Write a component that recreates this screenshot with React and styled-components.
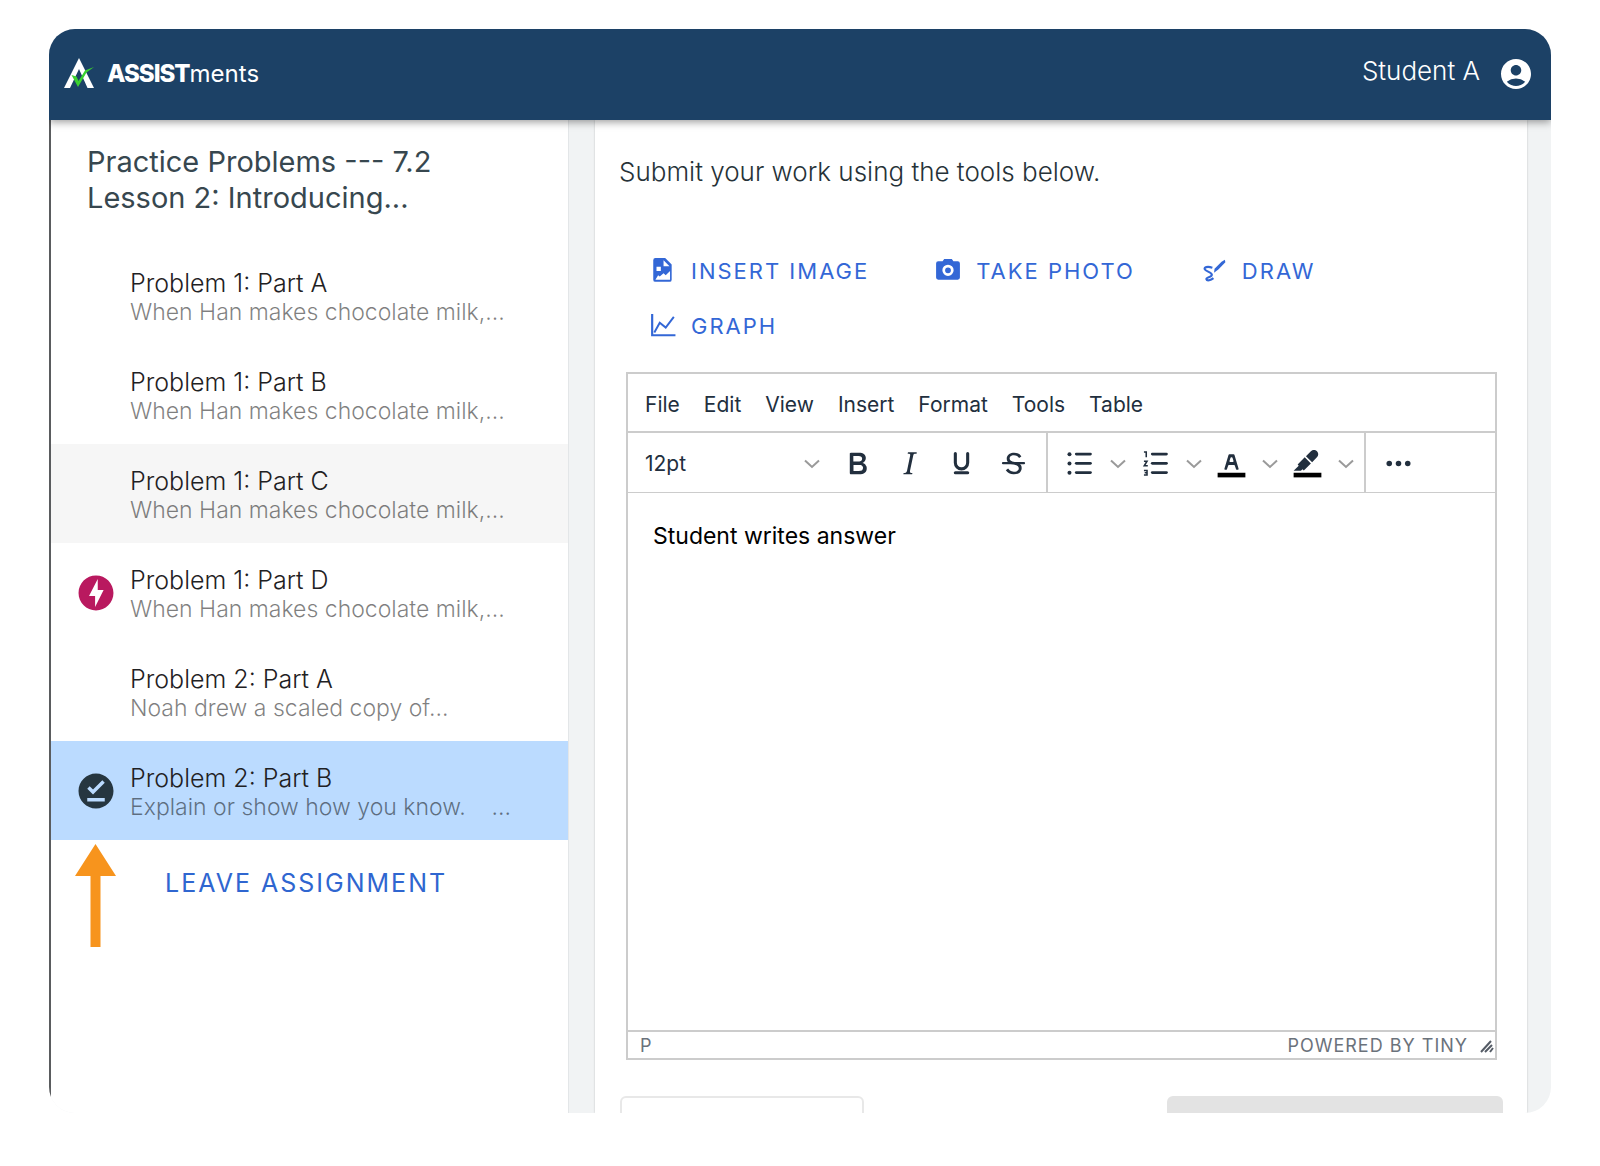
import React from 'react';
import styled, { createGlobalStyle } from 'styled-components';
import { MdAccountCircle, MdOfflineBolt, MdOfflinePin } from 'react-icons/md';

const sans = 'Inter, "Liberation Sans", sans-serif';
const wide = 'Inter, "Noto Sans", sans-serif';

const GlobalStyle = createGlobalStyle`
  *, *::before, *::after { box-sizing: border-box; }
  body { margin: 0; background: #fff; font-family: ${wide}; }
  button, select, textarea { font: inherit; color: inherit; background: none; border: 0; padding: 0; margin: 0; }
  button, select { cursor: pointer; }
  h1, p, ul { margin: 0; padding: 0; }
  svg { display: block; flex: none; }
`;

const Page = styled.div`
  display: flex;
  height: 100vh;
  padding: 29px 49px 53px;
`;

const Frame = styled.div`
  flex: 1;
  display: flex;
  flex-direction: column;
  min-width: 0;
  overflow: hidden;
  border-radius: 26px;
  background: #f1f3f4;
`;

const Header = styled.header`
  flex: none;
  z-index: 1;
  display: flex;
  align-items: center;
  justify-content: space-between;
  height: 91px;
  padding: 0 17px 2px 15px;
  background: #1c4166;
  color: #fff;
  box-shadow: 0 2px 8px rgba(0, 0, 0, 0.4);
`;

const Brand = styled.a`
  display: flex;
  align-items: center;
  gap: 12px;
  color: #fff;
  text-decoration: none;
  font: 400 24px/32px ${wide};
`;

const BrandStrong = styled.strong`
  font-weight: 800;
  letter-spacing: -1px;
`;

const Account = styled.button`
  display: flex;
  align-items: center;
  gap: 18px;
  font-size: 26px;
  font-weight: 300;
  line-height: 32px;
`;

const AccountName = styled.span`
  padding-bottom: 6px;
`;

const Columns = styled.div`
  flex: 1;
  display: flex;
  gap: 26px;
  min-height: 0;
  padding-right: 24px;
`;

const Sidebar = styled.nav`
  flex: none;
  width: 520px;
  border-left: 2px solid #5a5c5e;
  border-right: 1px solid #e3e6e8;
  background: #fff;
`;

const AssignmentTitle = styled.h1`
  padding: 24px 36px 30px;
  color: #37474f;
  font-size: 29px;
  font-weight: 400;
  line-height: 36px;
`;

const ProblemList = styled.ul`
  list-style: none;
`;

const Problem = styled.button`
  display: grid;
  grid-template-columns: 38px 1fr;
  column-gap: 17px;
  align-items: center;
  width: 100%;
  height: 99px;
  padding: 0 24px;
  text-align: left;
  background: ${({ $tone }) => ({ hover: '#f6f6f6', selected: '#bbdbff' }[$tone] || '#fff')};
`;

const ProblemText = styled.span`
  display: flex;
  flex-direction: column;
  padding-top: 3px;
  white-space: pre;
`;

const ProblemName = styled.span`
  color: #1f2123;
  font-size: 25px;
  font-weight: 300;
  line-height: 30px;
`;

const ProblemPreview = styled.span`
  color: rgba(0, 0, 0, 0.5);
  font-size: 23px;
  font-weight: 300;
  line-height: 29px;
`;

const SidebarFooter = styled.div`
  display: flex;
  align-items: flex-start;
  gap: 49px;
  padding: 4px 24px;
`;

const LeaveButton = styled.button`
  padding: 23px 0;
  color: #2f66d0;
  font-size: 25px;
  line-height: 32px;
  letter-spacing: 2px;
`;

const Main = styled.main`
  flex: 1;
  display: flex;
  flex-direction: column;
  min-width: 0;
  padding: 34px 24px 0;
  background: #fff;
  box-shadow: 0 0 2px rgba(0, 0, 0, 0.2);
`;

const Prompt = styled.p`
  color: #263238;
  font-size: 26px;
  font-weight: 300;
  line-height: 36px;
`;

const Actions = styled.div`
  display: flex;
  flex-wrap: wrap;
  column-gap: 66px;
  padding: 53px 31px 19px;
`;

const Action = styled.button`
  display: flex;
  align-items: center;
  gap: 15px;
  height: 55px;
  color: #3367d6;
  font-size: 22px;
  line-height: 28px;
  letter-spacing: 2px;
`;

const Editor = styled.section`
  flex: none;
  display: flex;
  flex-direction: column;
  height: 688px;
  margin: 0 6px 0 7px;
  border: 2px solid #ccc;
  color: #222f3e;
  font-family: ${sans};
`;

const MenuBar = styled.div`
  display: flex;
  align-items: center;
  gap: 24px;
  height: 59px;
  padding: 4px 17px 0;
  border-bottom: 2px solid #ccc;
  font-size: 21px;
  line-height: 28px;
`;

const Toolbar = styled.div`
  display: flex;
  height: 60px;
  border-bottom: 1px solid #ccc;
`;

const ToolGroup = styled.div`
  display: flex;
  align-items: center;
  gap: ${({ $gap }) => $gap}px;
  padding: ${({ $pad }) => $pad};
  border-right: ${({ $last }) => ($last ? '0' : '2px solid #ccc')};
`;

const SizeField = styled.label`
  display: grid;
  grid-template-columns: 1fr 16px;
  align-items: center;
  width: 175px;
  margin-right: 4px;
  font-size: 21px;
  line-height: 28px;

  & > * { grid-row: 1; }
  & > select { grid-column: 1 / 3; appearance: none; outline: 0; }
  & > svg { grid-column: 2; pointer-events: none; }
`;

const Split = styled.span`
  display: flex;
  align-items: center;
  gap: 12px;
`;

const Answer = styled.textarea`
  flex: 1;
  width: 100%;
  padding: 27px 25px;
  resize: none;
  outline: 0;
  color: #000;
  font-size: 23px;
  line-height: 32px;
`;

const StatusBar = styled.div`
  display: flex;
  align-items: center;
  justify-content: space-between;
  height: 28px;
  padding: 1px 0 0 12px;
  border-top: 2px solid #ccc;
  color: #6b727b;
  font-size: 18px;
  line-height: 24px;
`;

const Powered = styled.span`
  display: flex;
  align-items: center;
  gap: 12px;
  letter-spacing: 1px;
`;

const BottomActions = styled.div`
  display: flex;
  justify-content: space-between;
  padding: 36px 0 0 1px;
`;

const BottomButton = styled.button`
  height: 56px;
  width: ${({ $primary }) => ($primary ? 336 : 244)}px;
  border-radius: 6px;
  border: ${({ $primary }) => ($primary ? '0' : '2px solid #e8e8e8')};
  background: ${({ $primary }) => ($primary ? '#e3e3e3' : '#fff')};
`;

const Logo = () => (
  <svg width="31" height="31" viewBox="0 0 31 31" aria-hidden="true">
    <path d="M15 0 L30 30 H23.500 L15 11 L6 30 H0 Z" fill="#fff" />
    <path d="M7.500 17 L12.500 18.500 L14.500 23 L21 12.500 L30 9 L22.500 14.500 L14 29 Z" fill="#3bd12f" />
  </svg>
);

const Chevron = () => (
  <svg width="16" height="10" viewBox="0 0 16 10" fill="none" stroke="#9a9a9a" strokeWidth="2" aria-hidden="true">
    <path d="M1 1.500 L8 8 L15 1.500" />
  </svg>
);

const ToolIcon = ({ children }) => (
  <svg width="37" height="37" viewBox="0 0 24 24" fill="#222f3e" aria-hidden="true">{children}</svg>
);

const Bold = () => (
  <ToolIcon><path fillRule="evenodd" d="M7.800 19c-.3 0-.5 0-.6-.2l-.2-.5V5.700c0-.2 0-.4.2-.5l.6-.2h5c1.500 0 2.700.3 3.500 1 .7.6 1.100 1.400 1.100 2.500a3 3 0 0 1-.6 1.900c-.4.6-1 1-1.600 1.200.4.1.9.3 1.300.6s.8.7 1 1.200c.4.4.5 1 .5 1.600 0 1.300-.4 2.300-1.300 3-.8.7-2.100 1-3.800 1H7.800Zm5-8.300c.6 0 1.200-.1 1.600-.5.4-.3.6-.7.6-1.300 0-1.100-.8-1.700-2.300-1.700H9.300v3.500h3.400Zm.5 6c.7 0 1.300-.1 1.700-.4.4-.4.6-.9.6-1.500s-.2-1-.7-1.400c-.4-.3-1-.4-2-.4H9.400v3.800h4Z" /></ToolIcon>
);
const Italic = () => (
  <ToolIcon><path d="m16.700 4.700-.1.900h-.3c-.6 0-1 0-1.400.3-.3.3-.4.6-.5 1.100l-2.100 9.800v.6c0 .5.4.8 1.400.8h.2l-.2.8H8l.2-.8h.2c1.100 0 1.800-.5 2-1.500l2-9.800.1-.5c0-.6-.4-.8-1.400-.8h-.3l.2-.9h5.800Z" /></ToolIcon>
);
const Underline = () => (
  <ToolIcon>
    <path d="M8 5.500v6a4 4 0 0 0 8 0v-6" fill="none" stroke="#222f3e" strokeWidth="2" strokeLinecap="round" />
    <rect x="7" y="17" width="10" height="2" rx="1" />
  </ToolIcon>
);
const Strike = () => (
  <ToolIcon>
    <path d="M15.600 8.500c-.5-.7-1-1.100-1.300-1.300-.6-.4-1.300-.6-2-.6-2.700 0-2.800 1.700-2.800 2.100 0 1.600 1.800 2 3.200 2.300 4.400.9 4.600 2.800 4.600 3.900 0 1.400-.7 4.100-5 4.100A6.200 6.200 0 0 1 7 16.400l1.500-1.100c.4.6 1.600 2 3.700 2 1.600 0 2.500-.4 3-1.200.4-.8.3-2-.8-2.600-.7-.4-1.600-.7-2.900-1-1-.2-3.900-.8-3.900-3.600C7.600 6 10.300 5 12.400 5c2.900 0 4.200 1.600 4.700 2.400l-1.500 1.100Z" />
    <rect x="4.500" y="11" width="15" height="1.500" rx=".7" />
  </ToolIcon>
);
const Lines = () => [5, 11, 17].map((y) => <rect key={y} x="9" y={y} width="11" height="1.800" rx=".9" />);
const Bullets = () => (
  <ToolIcon>
    <Lines />
    {[6, 12, 18].map((y) => <circle key={y} cx="5.500" cy={y} r="1.300" />)}
  </ToolIcon>
);
const Numbers = () => (
  <ToolIcon>
    <Lines />
    <path d="M4.500 4.500H6V8M4.500 10.500H6.500L4.700 13.500H7M4.500 16.500H6.500V19.500H4.500M5 18H6.500" fill="none" stroke="#222f3e" />
  </ToolIcon>
);
const TextColor = () => (
  <ToolIcon>
    <rect x="3" y="18" width="18" height="3" fill="#000" />
    <path fillRule="evenodd" d="M8.700 16h-.8a.5.5 0 0 1-.5-.6l2.700-9c.1-.3.3-.4.5-.4h2.800c.2 0 .4.1.5.4l2.700 9a.5.5 0 0 1-.5.600h-.8a.5.5 0 0 1-.4-.4l-.7-2.200c0-.3-.3-.4-.5-.4h-3.400c-.2 0-.4.1-.5.4l-.7 2.200c0 .3-.2.4-.4.4Zm2.600-7.600-.6 2a.5.5 0 0 0 .5.600h1.600a.5.5 0 0 0 .5-.6l-.6-2c0-.3-.3-.4-.5-.4h-.4c-.2 0-.4.1-.5.4Z" />
  </ToolIcon>
);
const Highlight = () => (
  <ToolIcon>
    <rect x="3" y="18" width="18" height="3" fill="#000" />
    <path d="M7.700 16.700H3l3.300-3.300-.7-.8L10.200 8l4 4-4.600 4.600-.8-.8-1.100.9ZM11 7.300l3.200-3.200c1.400-1.400 3.500-.8 4.200.2.800 1.100.8 2.600-.3 3.700L15 11.200 11 7.300Z" />
  </ToolIcon>
);
const More = () => (
  <ToolIcon>{[6, 12, 18].map((x) => <circle key={x} cx={x} cy="12" r="1.800" />)}</ToolIcon>
);

const ActionIcon = ({ children }) => (
  <svg width="26" height="26" viewBox="0 0 24 24" fill="#3367d6" aria-hidden="true">{children}</svg>
);
const FileImage = () => (
  <ActionIcon>
    <path fillRule="evenodd" d="M5 0H14L20 6V20a2 2 0 0 1-2 2H5a2 2 0 0 1-2-2V2a2 2 0 0 1 2-2ZM12.500 2V7.500H18ZM5 20H18.500V12L14.500 16L12.500 14L9 17L7.500 16ZM6 8V12H10V8Z" />
  </ActionIcon>
);
const Camera = () => (
  <ActionIcon>
    <path fillRule="evenodd" d="M3 3H7L8.500 1H15.500L17 3H21a2 2 0 0 1 2 2V18a2 2 0 0 1-2 2H3a2 2 0 0 1-2-2V5a2 2 0 0 1 2-2ZM12 6.200A5.200 5.200 0 1 0 12 16.600A5.200 5.200 0 1 0 12 6.200ZM12 8.700A2.700 2.700 0 1 1 12 14.100A2.700 2.700 0 1 1 12 8.700Z" />
  </ActionIcon>
);
const Draw = () => (
  <ActionIcon>
    <path d="M10.500 9C6 7.500 2.500 8.500 3.500 10.500S10 13 10 15.500 4.500 17.500 5 19.500 9 20.500 11.500 18.500" fill="none" stroke="#3367d6" strokeWidth="2" />
    <path d="M12 13.500L12.500 10L19 3.500L22 1.500L22.500 4L16 10.500Z" />
  </ActionIcon>
);
const Graph = () => (
  <ActionIcon>
    <path d="M2 1V20.500H23.500" fill="none" stroke="#3367d6" strokeWidth="2" />
    <path d="M4 18L9 9L14.500 13.500L22 3.500" fill="none" stroke="#3367d6" strokeWidth="1.800" />
  </ActionIcon>
);

const Arrow = () => (
  <svg width="41" height="103" viewBox="0 0 41 103" fill="#f7941d" aria-hidden="true">
    <path d="M20.500 0L41 32H25.500V103H15.500V32H0Z" />
  </svg>
);
const Grip = () => (
  <svg width="15" height="14" viewBox="0 0 15 14" stroke="#555c66" strokeWidth="2" aria-hidden="true">
    <path d="M1 13L11 2M5 13L12 6M10 13L13 9" />
  </svg>
);

const han = 'When Han makes chocolate milk,...';
const problems = [
  { name: 'Problem 1: Part A', preview: han },
  { name: 'Problem 1: Part B', preview: han },
  { name: 'Problem 1: Part C', preview: han, tone: 'hover' },
  { name: 'Problem 1: Part D', preview: han, icon: <MdOfflineBolt size={42} color="#b9195f" /> },
  { name: 'Problem 2: Part A', preview: 'Noah drew a scaled copy of...' },
  { name: 'Problem 2: Part B', preview: 'Explain or show how you know.    ...', tone: 'selected', icon: <MdOfflinePin size={42} color="#263640" /> },
];

const menus = ['File', 'Edit', 'View', 'Insert', 'Format', 'Tools', 'Table'];
const formats = [['Bold', Bold], ['Italic', Italic], ['Underline', Underline], ['Strikethrough', Strike]];
const splits = [['Bullet list', Bullets], ['Numbered list', Numbers], ['Text color', TextColor], ['Background color', Highlight]];
const actions = [['INSERT IMAGE', FileImage], ['TAKE PHOTO', Camera], ['DRAW', Draw], ['GRAPH', Graph]];

export default function App() {
  return (
    <Page>
      <GlobalStyle />
      <Frame>
        <Header>
          <Brand href="#">
            <Logo />
            <span><BrandStrong>ASSIST</BrandStrong>ments</span>
          </Brand>
          <Account>
            <AccountName>Student A</AccountName>
            <MdAccountCircle size={36} />
          </Account>
        </Header>
        <Columns>
          <Sidebar>
            <AssignmentTitle>Practice Problems --- 7.2<br />Lesson 2: Introducing...</AssignmentTitle>
            <ProblemList>
              {problems.map((p) => (
                <li key={p.name}>
                  <Problem $tone={p.tone}>
                    <span>{p.icon}</span>
                    <ProblemText>
                      <ProblemName>{p.name}</ProblemName>
                      <ProblemPreview>{p.preview}</ProblemPreview>
                    </ProblemText>
                  </Problem>
                </li>
              ))}
            </ProblemList>
            <SidebarFooter>
              <Arrow />
              <LeaveButton>LEAVE ASSIGNMENT</LeaveButton>
            </SidebarFooter>
          </Sidebar>
          <Main>
            <Prompt>Submit your work using the tools below.</Prompt>
            <Actions>
              {actions.map(([label, Icon]) => (
                <Action key={label}><Icon />{label}</Action>
              ))}
            </Actions>
            <Editor>
              <MenuBar>
                {menus.map((m) => <button key={m}>{m}</button>)}
              </MenuBar>
              <Toolbar>
                <ToolGroup $gap={15} $pad="2px 14px 0 17px">
                  <SizeField>
                    <select aria-label="Font size" defaultValue="12pt"><option>12pt</option></select>
                    <Chevron />
                  </SizeField>
                  {formats.map(([label, Icon]) => <button key={label} aria-label={label}><Icon /></button>)}
                </ToolGroup>
                <ToolGroup $gap={11} $pad="2px 10px 0 13px">
                  {splits.map(([label, Icon]) => (
                    <Split key={label}>
                      <button aria-label={label}><Icon /></button>
                      <button aria-label={label + ' options'}><Chevron /></button>
                    </Split>
                  ))}
                </ToolGroup>
                <ToolGroup $gap={0} $pad="2px 14px 0" $last>
                  <button aria-label="More"><More /></button>
                </ToolGroup>
              </Toolbar>
              <Answer aria-label="Answer" defaultValue="Student writes answer" />
              <StatusBar>
                <span>P</span>
                <Powered>POWERED BY TINY<Grip /></Powered>
              </StatusBar>
            </Editor>
            <BottomActions>
              <BottomButton aria-label="Back" />
              <BottomButton aria-label="Submit" $primary />
            </BottomActions>
          </Main>
        </Columns>
      </Frame>
    </Page>
  );
}
